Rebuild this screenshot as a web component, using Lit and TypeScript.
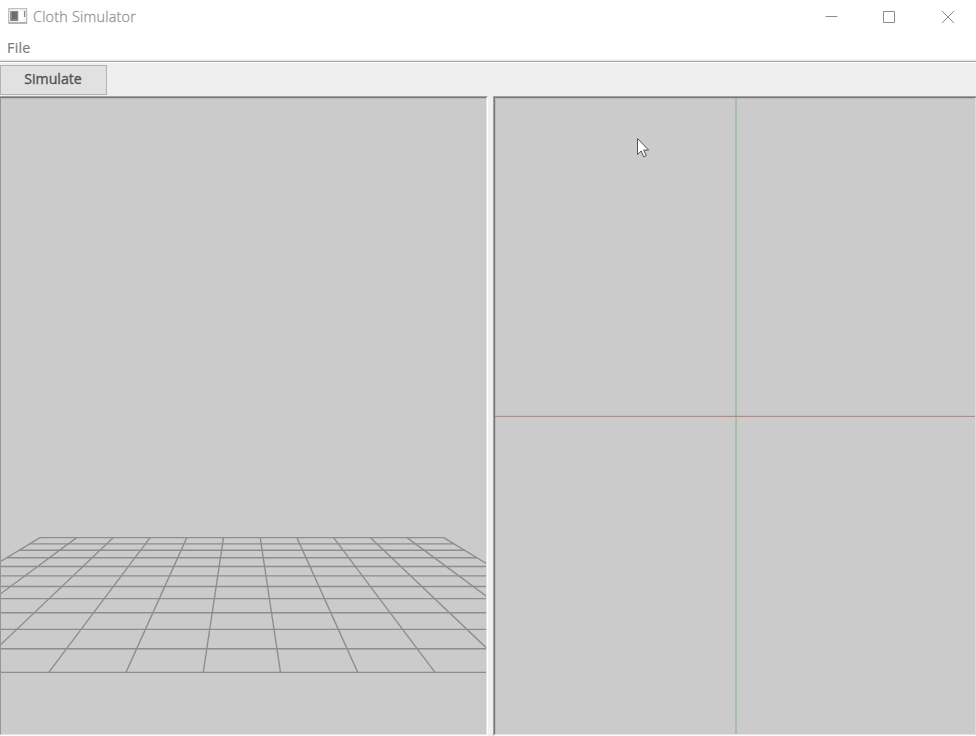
import { LitElement, html, css, svg } from "lit";
import { customElement } from "lit/decorators.js";

const ROWS = [537.6, 543.8, 550.2, 557.7, 566.5, 575.8, 586.5, 598.6, 612.7, 629.3, 648.7, 672.4];
const COLUMNS = Array.from({ length: 12 }, (_, i) => i);

@customElement("cloth-viewport")
class ClothViewport extends LitElement {
  static styles = css`
    :host { display: block; min-width: 0; }
    .scene { display: block; width: 100%; height: 100%; background: #cbcbcb; }
    .grid { stroke: #8d8d8d; stroke-width: 1.35; fill: none; }
    .bevel { fill: #bababa; }
  `;

  /* Floor grid in perspective; every column runs from the far edge to the near edge. */
  render() {
    return html`<svg class="scene" viewBox="1 98 485 636" preserveAspectRatio="none">
      <rect class="bevel" x="1" y="98" width="485" height="1" />
      <g class="grid">
        ${ROWS.map((y, i) => svg`<line x1=${i === 0 ? 40 : Math.max(0, 40 - (223 * (y - 537.6)) / 134.8)} y1=${y}
          x2=${Math.min(487, 443.7 + (223 * (y - 537.6)) / 134.8)} y2=${y} />`)}
        ${COLUMNS.map((i) => svg`<line x1=${40 + 36.7 * i} y1="537.6" x2=${-183 + 77.25 * i} y2="672.4" />`)}
      </g>
    </svg>`;
  }
}

@customElement("pattern-viewport")
class PatternViewport extends LitElement {
  static styles = css`
    :host { display: block; min-width: 0; }
    .scene { display: block; width: 100%; height: 100%; background: #cbcbcb; }
    .vertical { fill: #98bd98; }
    .horizontal { fill: #bd8583; }
    .bevel { fill: #bababa; }
  `;

  render() {
    return html`<svg class="scene" viewBox="495 98 480 636" preserveAspectRatio="none">
      <path class="bevel" d="M495 98h480v1H496v635h-1z" />
      <rect class="vertical" x="735.3" y="98" width="1.5" height="636" />
      <rect class="horizontal" x="495" y="415.8" width="480" height="1.2" />
    </svg>`;
  }
}

@customElement("app-root")
class AppRoot extends LitElement {
  static styles = css`
    :host {
      display: flex; flex-direction: column; position: relative;
      width: 976px; height: 736px; overflow: hidden; box-sizing: border-box;
      background: #f0f0f0; font-family: "Open Sans", "Noto Sans", sans-serif;
    }
    .titlebar { height: 34px; display: flex; align-items: center; background: #fff; box-sizing: border-box; padding-left: 8px; }
    .app-icon { width: 20px; height: 16px; margin-bottom: 2px; }
    .title { flex: 1; margin-left: 5px; font-size: 14.4px; line-height: 34px; color: #959595; white-space: nowrap; font-weight: 300; letter-spacing: 0.22px; -webkit-text-stroke: 0.3px #959595; }
    .controls { display: flex; }
    .control { width: 58.5px; height: 34px; }
    .glyph { fill: none; stroke: #8c8c8c; stroke-width: 1; }
    .menubar { height: 25px; display: flex; background: #fff; padding-left: 7px; }
    .menu { font-size: 14.3px; line-height: 28px; color: #7c7c7c; letter-spacing: 0.25px; -webkit-text-stroke: 0.2px #7c7c7c; }
    .rule { height: 4px; background: linear-gradient(#f5f5f5 0 1px, #e7e7e7 1px 2px, #a0a0a0 2px 3px, #fff 3px); }
    .toolbar { height: 33px; box-sizing: border-box; padding-top: 2px; background: #efefef; }
    .button {
      display: block; width: 107px; height: 30px; box-sizing: border-box; margin: 0; padding: 0 1px 2px 0;
      border: 1px solid #b2b2b2; border-radius: 0; background: #e1e1e1; color: #545158;
      font: 500 14.2px/26px "Open Sans", "Noto Sans", sans-serif; letter-spacing: 0;
      -webkit-text-stroke: 0.35px #545158;
    }
    .panes { flex: 1; min-height: 0; display: grid; grid-template-columns: 488px 483px; column-gap: 5px; }
    .pane { display: grid; min-height: 0; box-sizing: border-box; border: 1px solid; border-color: #a0a0a0 #fff #fff #a0a0a0; }
    .left { border-left-width: 0; }
    .inner { display: grid; min-width: 0; min-height: 0; border: 1px solid; border-color: #777 #e3e3e3 #e3e3e3 #777; }
    .left .inner { border-left-color: #969696; }
    .right { border-right-width: 0; }
    .right .inner { border-right-color: #dcdcdc; }
    .cursor { position: absolute; left: 636px; top: 137px; width: 15px; height: 22px; }
  `;

  render() {
    return html`
      <div class="titlebar">
        <svg class="app-icon" viewBox="0 0 20 16">
          <rect x=".7" y=".7" width="18" height="14.3" fill="#f3f5f5" stroke="#b2b2b2" />
          <path d="M.5 15H19" stroke="#929292" />
          <rect x="2.2" y="3" width="8" height="10" fill="#81878a" />
          <rect x="4" y="4" width="5" height="7" fill="#686f70" />
          <rect x="11.2" y="3" width="4" height="10" fill="#fff" />
          <rect x="16" y="3" width="1.3" height="6" fill="#839087" />
        </svg>
        <div class="title">Cloth Simulator</div>
        <div class="controls">
          <svg class="control" viewBox="800.5 0 58.5 34"><path class="glyph" d="M825 16.5h12" /></svg>
          <svg class="control" viewBox="859 0 58.5 34"><path class="glyph" d="M883.5 11.5h11v11h-11z" /></svg>
          <svg class="control" viewBox="918 0 58.5 34"><path class="glyph" d="M942 11l12 12M954 11l-12 12" /></svg>
        </div>
      </div>
      <div class="menubar"><div class="menu">File</div></div>
      <div class="rule"></div>
      <div class="toolbar"><button class="button">Simulate</button></div>
      <div class="panes">
        <div class="pane left"><div class="inner"><cloth-viewport></cloth-viewport></div></div>
        <div class="pane right"><div class="inner"><pattern-viewport></pattern-viewport></div></div>
      </div>
      <svg class="cursor" viewBox="0 0 15 22">
        <path d="M1.5 1.5v16l3.7-3.5 2.5 5.8 2.5-1.1-2.5-5.6h4.9z" fill="#fff" stroke="#555058" />
      </svg>
    `;
  }
}
